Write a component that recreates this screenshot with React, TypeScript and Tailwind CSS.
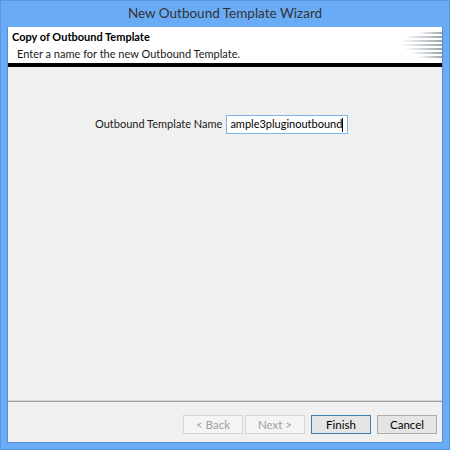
import React from "react";

function HeaderLines() {
  const rows = [
    { y: 2, x: 20 },
    { y: 6, x: 6 },
    { y: 10, x: 2 },
    { y: 14, x: 2 },
    { y: 18, x: 6 },
    { y: 22, x: 12 },
    { y: 26, x: 20 },
  ];
  return (
    <svg width="44" height="30" viewBox="0 0 44 30" className="absolute right-0 top-[3px]">
      <defs>
        <linearGradient id="hl" x1="0" x2="1" y1="0" y2="0">
          <stop offset="0" stopColor="#ffffff" />
          <stop offset="1" stopColor="#9aa3ad" />
        </linearGradient>
      </defs>
      {rows.map((r) => (
        <rect key={r.y} x={r.x} y={r.y} width={44 - r.x} height="2" fill="url(#hl)" />
      ))}
    </svg>
  );
}

function WizButton({ label, disabled, primary }: { label: string; disabled?: boolean; primary?: boolean }) {
  const cls = disabled
    ? "border-[#d5d5d5] text-[#a0a0a0] bg-[#f4f4f4]"
    : primary
      ? "border-[#3c7fb1] text-black bg-[#e5e5e5]"
      : "border-[#acacac] text-black bg-[#e5e5e5]";
  return (
    <button
      type="button"
      disabled={disabled}
      className={`w-[60px] h-[19px] border text-[11.5px] leading-none flex items-center justify-center ${cls}`}
    >
      {label}
    </button>
  );
}

export default function App() {
  return (
    <div
      className="w-[450px] h-[450px] bg-[#6aabf5] border border-[#5597e6] flex flex-col"
      style={{ fontFamily: 'Lato, "Open Sans", sans-serif' }}
    >
      <div className="h-[26px] flex items-center justify-center text-[13.5px] text-[#333333] pb-[1px]">
        New Outbound Template Wizard
      </div>
      <div className="flex-1 mx-[6px] mb-[6px] flex flex-col bg-[#f0f0f0] border border-[#4f8fdc] border-t-0">
        <div className="relative bg-white h-[36px] pl-[4px] pt-[2px]">
          <div className="text-[11px] font-bold leading-[15px] text-black">Copy of Outbound Template</div>
          <div className="text-[11px] leading-[15px] text-[#1a1a1a] pl-[5px] mt-[2px]">
            Enter a name for the new Outbound Template.
          </div>
          <HeaderLines />
        </div>
        <div className="h-[4px] bg-black" />
        <div className="flex-1 pt-[48px]">
          <div className="flex items-center pl-[87px] gap-[4px]">
            <span className="text-[11px] text-[#1a1a1a] whitespace-nowrap">Outbound Template Name</span>
            <div className="w-[122px] h-[19px] border border-[#7eb4ea] bg-white flex items-center px-[3px] text-[11px] text-black overflow-hidden whitespace-nowrap">
              <span>ample3pluginoutbound</span>
              <span className="w-[1px] h-[14px] bg-black shrink-0" />
            </div>
          </div>
        </div>
        <div className="h-[1px] bg-[#d4d4d4]" />
        <div className="h-[1px] bg-[#a0a0a0]" />
        <div className="h-[40px] flex items-start justify-end pt-[13px] pr-[5px]">
          <div className="flex gap-[2px]">
            <WizButton label="< Back" disabled />
            <WizButton label="Next >" disabled />
          </div>
          <div className="flex gap-[6px] ml-[6px]">
            <WizButton label="Finish" primary />
            <WizButton label="Cancel" />
          </div>
        </div>
      </div>
    </div>
  );
}
